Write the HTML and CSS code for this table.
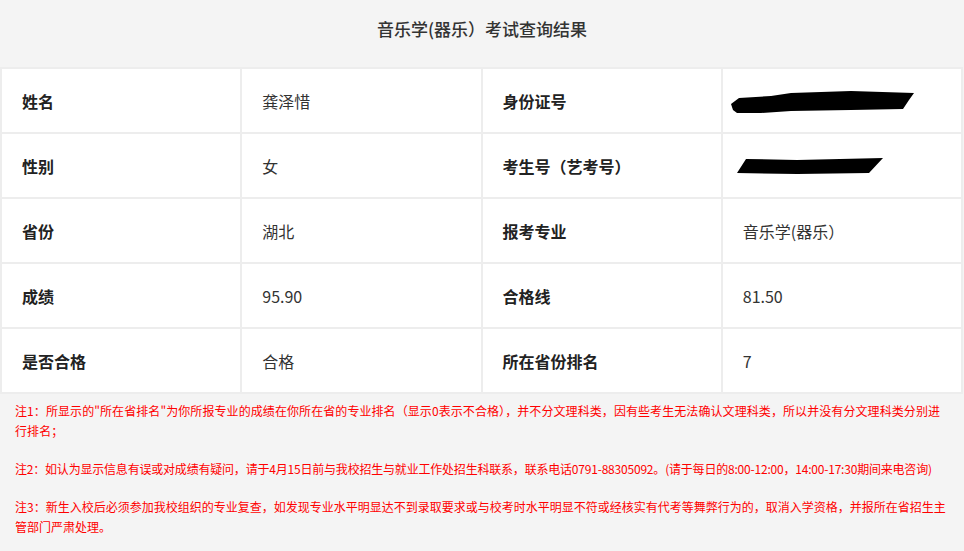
FILE: index.html
```html
<!DOCTYPE html>
<html lang="zh-CN">
<head>
    <meta charset="UTF-8">
    <meta name="viewport" content="width=device-width, initial-scale=1.0">
    <title>考试查询结果</title>
    <link rel="stylesheet" href="styles.css">
</head>
<body>
    <div class="result-page">
        <h2 class="result-title">音乐学(器乐）考试查询结果</h2>
        <table class="result-table">
            <tr>
                <th>姓名</th>
                <td>龚泽惜</td>
                <th>身份证号</th>
                <td>
                    <svg class="mask mask-id" width="184" height="24" viewBox="0 0 184 24">
                        <path d="M0 14 L8 8 L40 6 L60 3 L120 1 L183 3 L178 10 L172 19 L120 20 L60 21 L30 23 L6 23 L2 20 Z" fill="#000"/>
                    </svg>
                </td>
            </tr>
            <tr>
                <th>性别</th>
                <td>女</td>
                <th>考生号（艺考号）</th>
                <td>
                    <svg class="mask mask-no" width="146" height="18" viewBox="0 0 146 18">
                        <path d="M9 1 L60 2 L146 0 L132 15 L60 16 L0 15 Z" fill="#000"/>
                    </svg>
                </td>
            </tr>
            <tr>
                <th>省份</th>
                <td>湖北</td>
                <th>报考专业</th>
                <td>音乐学(器乐）</td>
            </tr>
            <tr>
                <th>成绩</th>
                <td>95.90</td>
                <th>合格线</th>
                <td>81.50</td>
            </tr>
            <tr>
                <th>是否合格</th>
                <td>合格</td>
                <th>所在省份排名</th>
                <td>7</td>
            </tr>
        </table>
        <div class="notes">
            <p class="note-loose">注1：所显示的"所在省排名"为你所报专业的成绩在你所在省的专业排名（显示0表示不合格），并不分文理科类，因有些考生无法确认文理科类，所以并没有分文理科类分别进行排名；</p>
            <p class="note-tight">注2：如认为显示信息有误或对成绩有疑问，请于4月15日前与我校招生与就业工作处招生科联系，联系电话0791-88305092。(请于每日的8:00-12:00，14:00-17:30期间来电咨询)</p>
            <p>注3：新生入校后必须参加我校组织的专业复查，如发现专业水平明显达不到录取要求或与校考时水平明显不符或经核实有代考等舞弊行为的，取消入学资格，并报所在省招生主管部门严肃处理。</p>
        </div>
    </div>
</body>
</html>
```

FILE: styles.css
```css
body {
    margin: 0;
    font-family: "Noto Sans CJK SC", "Noto Sans", sans-serif;
    background-color: #f4f4f4;
    color: #333;
}
.result-page {
    width: 964px;
}
.result-title {
    margin: 0;
    height: 67px;
    line-height: 58px;
    text-align: center;
    font-size: 17px;
    font-weight: 500;
    color: #333;
}
.result-table {
    width: 963px;
    border-collapse: collapse;
    table-layout: fixed;
    background-color: #fff;
}
.result-table th,
.result-table td {
    height: 63px;
    padding: 0 0 0 20px;
    border: 2px solid #ededed;
    text-align: left;
    vertical-align: middle;
}
.result-table th {
    font-size: 16px;
    font-weight: bold;
    color: #222;
}
.result-table td {
    font-size: 16px;
    color: #333;
}
.mask {
    display: block;
}
.mask-id {
    margin: 2px 0 0 -12px;
}
.mask-no {
    margin: 2px 0 0 -6px;
}
.notes {
    padding: 7px 17px 0 15px;
}
.notes p {
    margin: 0 0 18px;
    font-size: 12px;
    line-height: 20px;
    color: #f00;
}
.notes .note-loose {
    letter-spacing: 0.08px;
}
.notes .note-tight {
    letter-spacing: -0.2px;
}
```
